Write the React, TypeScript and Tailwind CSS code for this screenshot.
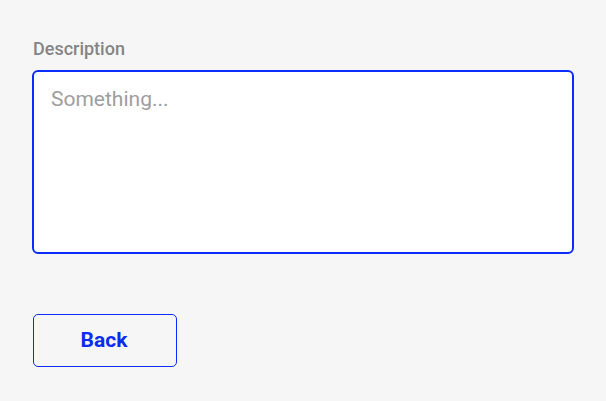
import React from "react";

export default function App() {
  return (
    <div className="w-[606px] h-[401px] bg-[#f6f6f6] px-[32px] pt-[37px] font-['Roboto',sans-serif]">
      <label className="block text-[18px] leading-[24px] font-medium text-[#858585] pl-[1px]">Description</label>
      <textarea
        placeholder="Something..."
        className="mt-[9px] block w-[542px] h-[184px] bg-white border-2 border-[#0a2cff] rounded-[6px] px-[17px] py-[14px] text-[21px] leading-[26px] text-[#333] placeholder:text-[#9e9e9e] resize-none outline-none"
      />
      <button className="mt-[60px] ml-[1px] w-[144px] h-[53px] rounded-[5px] border-[1.5px] border-[#0a2cff] bg-transparent text-[#0a2cf0] text-[21px] font-bold">
        <span className="relative -left-[1px]">Back</span>
      </button>
    </div>
  );
}
